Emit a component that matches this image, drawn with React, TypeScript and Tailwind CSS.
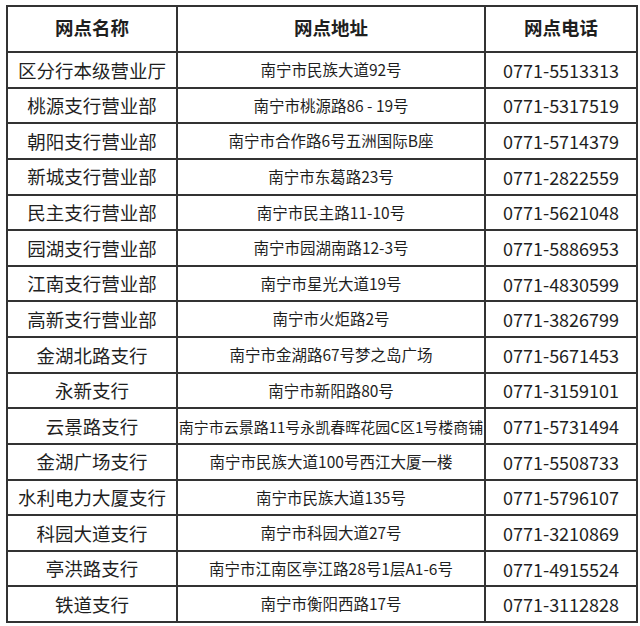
const rows: [string, string, string][] = [
  ["区分行本级营业厅", "南宁市民族大道92号", "0771-5513313"],
  ["桃源支行营业部", "南宁市桃源路86 - 19号", "0771-5317519"],
  ["朝阳支行营业部", "南宁市合作路6号五洲国际B座", "0771-5714379"],
  ["新城支行营业部", "南宁市东葛路23号", "0771-2822559"],
  ["民主支行营业部", "南宁市民主路11-10号", "0771-5621048"],
  ["园湖支行营业部", "南宁市园湖南路12-3号", "0771-5886953"],
  ["江南支行营业部", "南宁市星光大道19号", "0771-4830599"],
  ["高新支行营业部", "南宁市火炬路2号", "0771-3826799"],
  ["金湖北路支行", "南宁市金湖路67号梦之岛广场", "0771-5671453"],
  ["永新支行", "南宁市新阳路80号", "0771-3159101"],
  ["云景路支行", "南宁市云景路11号永凯春晖花园C区1号楼商铺", "0771-5731494"],
  ["金湖广场支行", "南宁市民族大道100号西江大厦一楼", "0771-5508733"],
  ["水利电力大厦支行", "南宁市民族大道135号", "0771-5796107"],
  ["科园大道支行", "南宁市科园大道27号", "0771-3210869"],
  ["亭洪路支行", "南宁市江南区亭江路28号1层A1-6号", "0771-4915524"],
  ["铁道支行", "南宁市衡阳西路17号", "0771-3112828"],
];

export default function App() {
  return (
    <div className="h-[626px] w-[640px] bg-white pl-[6px] pt-[5px] font-['Noto_Sans_CJK_SC',sans-serif] text-[#1f1f1f]">
      <table className="w-[630px] table-fixed border-collapse">
        <colgroup>
          <col className="w-[170px]" />
          <col className="w-[308px]" />
          <col className="w-[152px]" />
        </colgroup>
        <thead>
          <tr className="h-[46px] text-[18.5px] font-bold">
            <th className="border-2 border-[#333] p-0 pb-[3px] text-center">网点名称</th>
            <th className="border-2 border-[#333] p-0 pb-[3px] text-center">网点地址</th>
            <th className="border-2 border-[#333] p-0 pb-[3px] text-center">网点电话</th>
          </tr>
        </thead>
        <tbody>
          {rows.map(([name, addr, phone]) => (
            <tr key={name} className="h-[35.625px]">
              <td className="border-2 border-[#333] p-0 text-center text-[18.5px] leading-none">{name}</td>
              <td
                className={
                  addr.length > 20
                    ? "whitespace-nowrap border-2 border-[#333] p-0 text-center text-[15px] leading-none"
                    : "whitespace-nowrap border-2 border-[#333] p-0 text-center text-[15.5px] leading-none"
                }
              >
                {addr}
              </td>
              <td className="border-2 border-[#333] p-0 text-center text-[18px] leading-none">{phone}</td>
            </tr>
          ))}
        </tbody>
      </table>
    </div>
  );
}
